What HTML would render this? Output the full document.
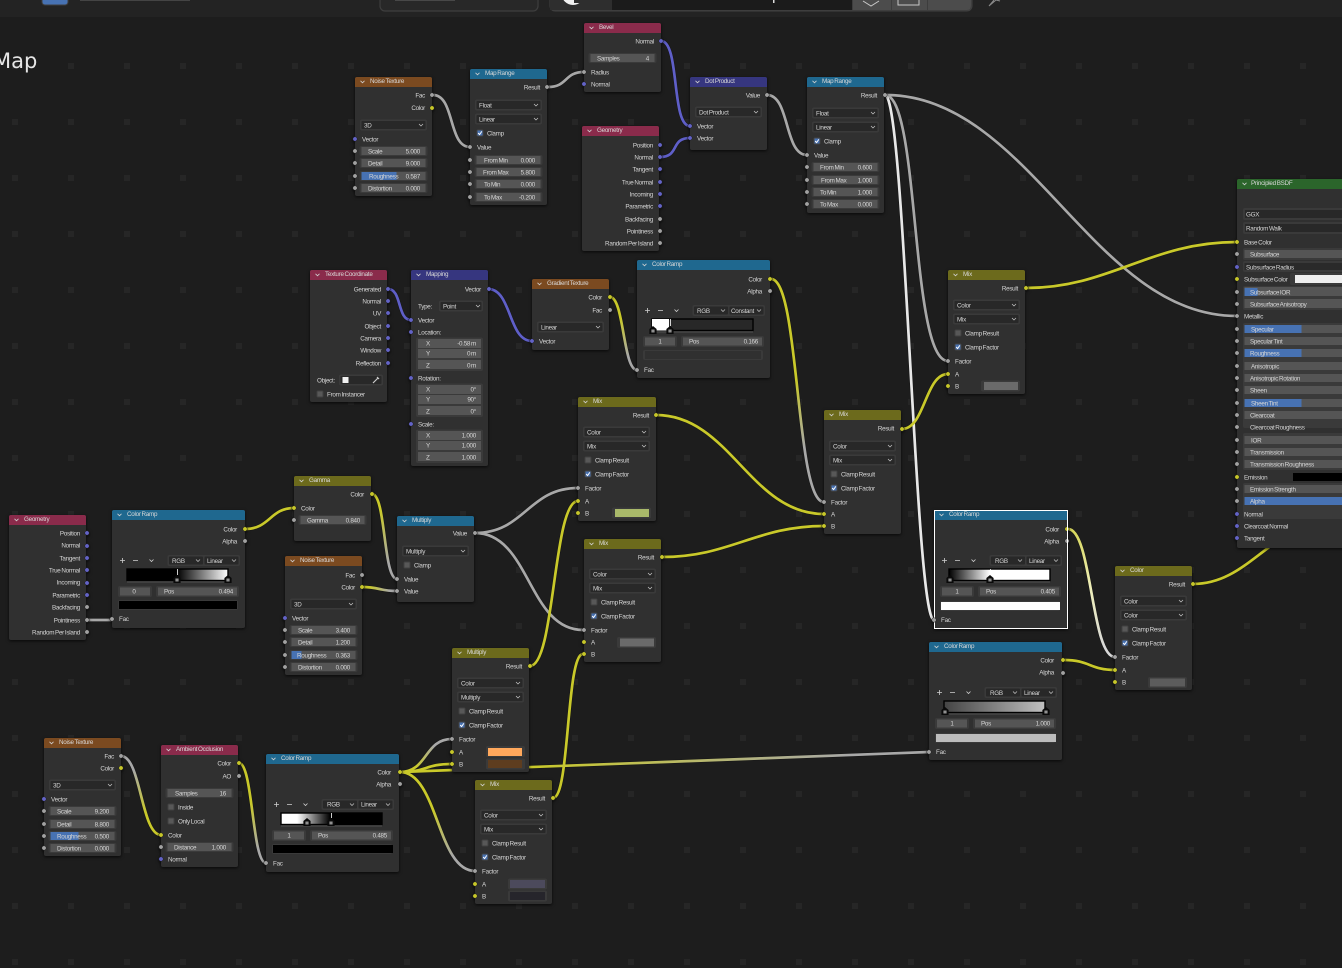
<!DOCTYPE html>
<html><head><meta charset="utf-8"><title>Node Editor Map</title>
<style>
html,body{margin:0;padding:0;background:#1d1d1d;width:1342px;height:968px;overflow:hidden}
svg{display:block;position:absolute;left:0;top:0;filter:blur(.3px)}
text{font-family:"Liberation Sans",sans-serif;font-size:6.3px;fill:#d6d6d6;letter-spacing:-.28px;word-spacing:-.6px}
.e{text-anchor:end}
.c{text-anchor:middle}
.h{fill:#d8d8d8}
.n{filter:drop-shadow(0 1px 1.5px rgba(0,0,0,.75))}
.w{fill:none;stroke-width:2.7;stroke-linecap:round}
.o{fill:none;stroke:#141414;stroke-width:3.8;stroke-linecap:round;opacity:.7}
.b{fill:#303030}
</style></head>
<body>
<svg width="1342" height="968" viewBox="0 0 1342 968" xmlns="http://www.w3.org/2000/svg">
<defs>
<pattern id="grid" patternUnits="userSpaceOnUse" x="12" y="7" width="56" height="56"><rect width="6" height="6" fill="#262626"/></pattern>
<linearGradient id="yg1" gradientUnits="userSpaceOnUse" x1="771" y1="279" x2="824" y2="502"><stop offset=".45" stop-color="#c9c92a"/><stop offset=".75" stop-color="#a8a8a8"/></linearGradient>
<linearGradient id="yg2" gradientUnits="userSpaceOnUse" x1="610" y1="297" x2="637" y2="370"><stop offset=".3" stop-color="#c9c92a"/><stop offset=".8" stop-color="#a8a8a8"/></linearGradient>
<linearGradient id="yg3" gradientUnits="userSpaceOnUse" x1="372" y1="494" x2="397" y2="579"><stop offset=".2" stop-color="#c9c92a"/><stop offset=".8" stop-color="#a8a8a8"/></linearGradient>
<linearGradient id="yg4" gradientUnits="userSpaceOnUse" x1="362" y1="587" x2="397" y2="591"><stop offset=".2" stop-color="#c9c92a"/><stop offset=".8" stop-color="#a8a8a8"/></linearGradient>
<linearGradient id="yg5" gradientUnits="userSpaceOnUse" x1="400" y1="772" x2="452" y2="739"><stop offset=".25" stop-color="#c9c92a"/><stop offset=".7" stop-color="#a8a8a8"/></linearGradient>
<linearGradient id="yg6" gradientUnits="userSpaceOnUse" x1="400" y1="772" x2="475" y2="871"><stop offset=".4" stop-color="#c9c92a"/><stop offset=".8" stop-color="#a8a8a8"/></linearGradient>
<linearGradient id="yg7" gradientUnits="userSpaceOnUse" x1="400" y1="772" x2="929" y2="752"><stop offset=".25" stop-color="#c9c92a"/><stop offset=".85" stop-color="#a8a8a8"/></linearGradient>
<linearGradient id="gy1" gradientUnits="userSpaceOnUse" x1="121" y1="756" x2="161" y2="835"><stop offset=".2" stop-color="#a8a8a8"/><stop offset=".7" stop-color="#c9c92a"/></linearGradient>
<linearGradient id="yg8" gradientUnits="userSpaceOnUse" x1="239" y1="763" x2="266" y2="863"><stop offset=".4" stop-color="#c9c92a"/><stop offset=".85" stop-color="#a8a8a8"/></linearGradient>
<linearGradient id="yw" gradientUnits="userSpaceOnUse" x1="1068" y1="529" x2="1115" y2="657"><stop offset=".05" stop-color="#d8d860"/><stop offset=".45" stop-color="#eeeeb8"/><stop offset=".9" stop-color="#d8d8d8"/></linearGradient>
<linearGradient id="r1"><stop offset=".494" stop-color="#000"/><stop offset="1" stop-color="#fff"/></linearGradient>
<linearGradient id="r2"><stop offset="0" stop-color="#000"/><stop offset=".405" stop-color="#fff"/></linearGradient>
<linearGradient id="r3"><stop offset="0" stop-color="#444"/><stop offset="1" stop-color="#c0c0c0"/></linearGradient>
<linearGradient id="r4"><stop offset=".16" stop-color="#fff"/><stop offset=".485" stop-color="#000"/></linearGradient>
<g id="F"><rect x="4.5" y="-5" width="68" height="10" rx="2" fill="#3a3a3a"/><rect x="6.5" y="-4" width="64" height="8" fill="#555"/></g>
<g id="D"><rect x="5" y="-5.5" width="67" height="11" rx="2" fill="#3a3a3a"/><rect x="6.5" y="-4" width="64" height="8" rx="1" fill="#282828"/><polyline points="64,-1 66,1 68,-1" fill="none" stroke="#c8c8c8" stroke-width=".7"/></g>
<g id="C"><rect x="6.5" y="-3.5" width="7" height="7" rx="1.5" fill="#444"/><rect x="7.5" y="-2.5" width="5" height="5" fill="#4772b3"/><polyline points="8.2,0 9.6,1.6 11.8,-1.6" fill="none" stroke="#fff" stroke-width="1"/></g>
<g id="U"><rect x="6.5" y="-3.5" width="7" height="7" rx="1.5" fill="#404040"/><rect x="7.5" y="-2.5" width="5" height="5" fill="#585858"/></g>
<circle id="sg" r="2.2" fill="#a1a1a1" stroke="#1a1a1a" stroke-width=".5"/>
<circle id="sy" r="2.2" fill="#c7c729" stroke="#1a1a1a" stroke-width=".5"/>
<circle id="sb" r="2.2" fill="#6363c7" stroke="#1a1a1a" stroke-width=".5"/>
<g id="H"><path d="M-3.6 8V3L0 0 3.600 3V8Z" fill="#0a0a0a"/><rect x="-1.6" y="3.5" width="3.2" height="3" fill="#909090"/></g>
<polyline id="v" points="5.5,3.8 7.5,5.8 9.5,3.8" fill="none" stroke="#d0d0d0" stroke-width=".8"/>
<g id="X"><rect x="6" y="-5" width="120" height="10" rx="2" fill="#3a3a3a"/></g>
<g id="RB"><rect width="133" height="118" rx="2" class="b"/>
<path d="M8 50.5h5M10.5 48v5M21 50.5h5" stroke="#cfcfcf" stroke-width=".8" fill="none"/><polyline points="37.5,49.5 39.5,51.5 41.5,49.5" fill="none" stroke="#cfcfcf" stroke-width=".8"/>
<rect x="55.5" y="45" width="72.5" height="11" rx="2" fill="#3a3a3a"/><rect x="57" y="46.5" width="34" height="8" rx="1" fill="#282828"/><rect x="92.5" y="46.5" width="34" height="8" rx="1" fill="#282828"/>
<polyline points="84,49.5 86,51.5 88,49.5" fill="none" stroke="#c8c8c8" stroke-width=".7"/><polyline points="120,49.5 122,51.5 124,49.5" fill="none" stroke="#c8c8c8" stroke-width=".7"/>
<rect x="6" y="76" width="34" height="11" rx="2" fill="#3a3a3a"/><rect x="8" y="77.5" width="30" height="8" fill="#555"/>
<rect x="44" y="76" width="83" height="11" rx="2" fill="#3a3a3a"/><rect x="46" y="77.5" width="79" height="8" fill="#555"/>
<rect x="15" y="71.5" width="101" height=".9" fill="#5a5a5a"/>
</g>
</defs>
<rect width="1342" height="968" fill="#1d1d1d"/>
<rect width="1342" height="968" fill="url(#grid)"/>

<!-- top bar -->
<rect width="1342" height="17" fill="#232323"/>
<rect x="42" y="-8" width="26" height="13" rx="3" fill="#4772b3" stroke="#3f3f3f"/>
<rect x="380" y="-10" width="158" height="21" rx="5" fill="#282828" stroke="#3e3e3e" stroke-width="1.2"/>
<rect x="550" y="-10" width="422" height="21" rx="5" fill="#3d3d3d" stroke="#404040" stroke-width="1"/>
<path d="M555 -10H612V10H550V-5Z" fill="#2e2e2e"/>
<rect x="612" y="-10" width="240" height="20" fill="#1b1b1b"/>
<rect x="853" y="-10" width="38" height="20" fill="#4c4c4c"/><rect x="892" y="-10" width="35" height="20" fill="#4c4c4c"/><path d="M928 -10H967Q971 -10 971 -5V5Q971 10 967 10H928Z" fill="#4c4c4c"/>
<polyline points="863,1 871,6 879,1" fill="none" stroke="#c8c8c8" stroke-width="1"/>
<path d="M898 -4V5H919V-4" fill="none" stroke="#c8c8c8" stroke-width="1"/>
<rect x="773" y="0" width="1.5" height="3" fill="#ddd"/>
<circle cx="573" cy="-6.500" r="11.5" fill="#f0f0f0"/><rect x="574" y="-10" width="14" height="13" fill="#2e2e2e"/>
<path d="M989 6L996 0M996 0L1000 1M989 6L994 0" fill="none" stroke="#8a8a8a" stroke-width="1"/>
<rect x="80" y="0" width="110" height="1" fill="#444"/><rect x="395" y="0" width="60" height="1" fill="#484848"/>
<text x="-7" y="68" style="font-size:21px;fill:#e6e6e6;letter-spacing:0;font-family:'DejaVu Sans',sans-serif">Map</text>

<!-- wires (shadows) -->
<g class="o">
<path d="M433 95C455 95 448 147 470 147"/><path d="M548 87C568 87 564 72 584 72"/><path d="M661 41C680 41 671 126 690 126"/><path d="M660 157C680 157 670 138 690 138"/>
<path d="M767 95C790 95 784 155 807 155"/><path d="M885 95C1030 95 1092 316 1237 316"/><path d="M885 95C920 95 910 361 948 361"/><path d="M885 95C905 95 915 620 934 620"/>
<path d="M388 289C402 289 397 320 411 320"/><path d="M488 289C512 289 508 341 532 341"/><path d="M610 297C624 297 623 370 637 370"/><path d="M771 279C800 279 795 502 824 502"/>
<path d="M1026 288C1110 288 1150 242 1237 242"/><path d="M902 429C925 429 925 374 948 374"/><path d="M656 415C730 415 750 514 824 514"/><path d="M662 557C730 557 756 526 824 526"/>
<path d="M1193 584C1225 584 1245 565 1268 548L1290 530"/><path d="M372 494C386 494 383 579 397 579"/><path d="M362 587C380 587 379 591 397 591"/><path d="M245 529C270 529 270 508 294 508"/>
<path d="M475 533C525 533 528 488 578 488"/><path d="M475 533C530 533 528 630 583 630"/><path d="M87 620H112"/><path d="M530 666C555 666 553 501 578 501"/><path d="M553 798C570 798 566 654 583 654"/>
<path d="M400 772C428 772 424 739 452 739"/><path d="M400 772C428 772 424 764 452 764"/><path d="M400 772C438 772 437 871 475 871"/><path d="M400 772C420 772 910 752 929 752"/>
<path d="M121 756C141 756 141 835 161 835"/><path d="M239 763C253 763 252 863 266 863"/><path d="M1068 529C1092 529 1091 657 1115 657"/><path d="M1064 660C1090 660 1090 670 1115 670"/>
</g>
<!-- wires -->
<g class="w">
<g stroke="#a8a8a8">
<path d="M433 95C455 95 448 147 470 147"/><path d="M548 87C568 87 564 72 584 72"/><path d="M767 95C790 95 784 155 807 155"/><path d="M885 95C1030 95 1092 316 1237 316"/><path d="M885 95C920 95 910 361 948 361"/>
<path d="M475 533C525 533 528 488 578 488"/><path d="M475 533C530 533 528 630 583 630"/><path d="M87 620H112"/>
</g>
<path d="M885 95C905 95 915 620 934 620" stroke="#e8e8e8"/>
<g stroke="#5f5fc8">
<path d="M661 41C680 41 671 126 690 126"/><path d="M660 157C680 157 670 138 690 138"/><path d="M388 289C402 289 397 320 411 320"/><path d="M488 289C512 289 508 341 532 341"/>
</g>
<g stroke="#c9c92a">
<path d="M1026 288C1110 288 1150 242 1237 242"/><path d="M902 429C925 429 925 374 948 374"/><path d="M656 415C730 415 750 514 824 514"/><path d="M662 557C730 557 756 526 824 526"/><path d="M1193 584C1225 584 1245 565 1268 548L1290 530"/><path d="M245 529C270 529 270 508 294 508"/><path d="M530 666C555 666 553 501 578 501"/><path d="M553 798C570 798 566 654 583 654"/><path d="M400 772C428 772 424 764 452 764"/><path d="M1064 660C1090 660 1090 670 1115 670"/>
</g>
<path d="M610 297C624 297 623 370 637 370" stroke="url(#yg2)"/>
<path d="M771 279C800 279 795 502 824 502" stroke="url(#yg1)"/>
<path d="M372 494C386 494 383 579 397 579" stroke="url(#yg3)"/>
<path d="M362 587C380 587 379 591 397 591" stroke="url(#yg4)"/>
<path d="M400 772C428 772 424 739 452 739" stroke="url(#yg5)"/>
<path d="M400 772C438 772 437 871 475 871" stroke="url(#yg6)"/>
<path d="M400 772C420 772 910 752 929 752" stroke="url(#yg7)"/>
<path d="M121 756C141 756 141 835 161 835" stroke="url(#gy1)"/>
<path d="M239 763C253 763 252 863 266 863" stroke="url(#yg8)"/>
<path d="M1068 529C1092 529 1091 657 1115 657" stroke="url(#yw)"/>
</g>

<!-- Noise Texture 1 -->
<g class="n" transform="translate(355,77)"><rect width="77" height="119" rx="2" class="b"/><path d="M0 10V2Q0 0 2 0H75Q77 0 77 2V10Z" fill="#7b4a20"/><use href="#v"/><text x="15" y="6.2" class="h">Noise Texture</text>
<text x="70" y="20.5" class="e">Fac</text><text x="70" y="33" class="e">Color</text><use href="#sg" x="77" y="18"/><use href="#sy" x="77" y="31"/>
<use href="#D" y="48"/><text x="9" y="50.5">3D</text><text x="7" y="64.5">Vector</text><use href="#sb" y="62"/>
<use href="#F" y="74"/><text x="13" y="76.5">Scale</text><text x="65" y="76.5" class="e">5.000</text><use href="#sg" y="74"/>
<use href="#F" y="86"/><text x="13" y="88.5">Detail</text><text x="65" y="88.5" class="e">9.000</text><use href="#sg" y="86"/>
<use href="#F" y="99"/><rect x="6.5" y="95" width="35" height="8" fill="#4772b3"/><text x="14" y="101.5">Roughness</text><text x="65" y="101.5" class="e">0.587</text><use href="#sg" y="99"/>
<use href="#F" y="111"/><text x="13" y="113.5">Distortion</text><text x="65" y="113.5" class="e">0.000</text><use href="#sg" y="111"/></g>

<!-- MapRange 1 -->
<g class="n" transform="translate(470,69)"><rect width="77" height="136" rx="2" class="b"/><path d="M0 10V2Q0 0 2 0H75Q77 0 77 2V10Z" fill="#1f688f"/><use href="#v"/><text x="15" y="6.2" class="h">Map Range</text>
<text x="70" y="20.5" class="e">Result</text><use href="#sg" x="77" y="18"/>
<use href="#D" y="36"/><text x="9" y="38.5">Float</text><use href="#D" y="50"/><text x="9" y="52.5">Linear</text>
<use href="#C" y="64"/><text x="17" y="66.5">Clamp</text><text x="7" y="80.5">Value</text><use href="#sg" y="78"/>
<use href="#F" y="91"/><text x="14" y="93.5">From Min</text><text x="65" y="93.5" class="e">0.000</text><use href="#sg" y="91"/>
<use href="#F" y="103"/><text x="13" y="105.5">From Max</text><text x="65" y="105.5" class="e">5.800</text><use href="#sg" y="103"/>
<use href="#F" y="115"/><text x="14" y="117.5">To Min</text><text x="65" y="117.5" class="e">0.000</text><use href="#sg" y="115"/>
<use href="#F" y="128"/><text x="14" y="130.5">To Max</text><text x="65" y="130.5" class="e">-0.200</text><use href="#sg" y="128"/></g>

<!-- Bevel -->
<g class="n" transform="translate(584,23)"><rect width="77" height="69" rx="2" class="b"/><path d="M0 10V2Q0 0 2 0H75Q77 0 77 2V10Z" fill="#8a2b4b"/><use href="#v"/><text x="15" y="6.2" class="h">Bevel</text>
<text x="70" y="20.5" class="e">Normal</text><use href="#sb" x="77" y="18"/>
<use href="#F" y="35"/><text x="13" y="37.5">Samples</text><text x="65" y="37.5" class="e">4</text>
<text x="7" y="51.5">Radius</text><use href="#sg" y="49"/><text x="7" y="63.5">Normal</text><use href="#sb" y="61"/></g>

<!-- Geometry 1 -->
<g class="n" transform="translate(582,126)"><rect width="77" height="125" rx="2" class="b"/><path d="M0 10V2Q0 0 2 0H75Q77 0 77 2V10Z" fill="#8a2b4b"/><use href="#v"/><text x="15" y="6.2" class="h">Geometry</text>
<text x="71" y="21.5" class="e">Position</text><use href="#sb" x="78" y="19"/><text x="71" y="33.5" class="e">Normal</text><use href="#sb" x="78" y="31"/><text x="71" y="45.5" class="e">Tangent</text><use href="#sb" x="78" y="43"/><text x="71" y="58.5" class="e">True Normal</text><use href="#sb" x="78" y="56"/><text x="71" y="70.5" class="e">Incoming</text><use href="#sb" x="78" y="68"/><text x="71" y="82.5" class="e">Parametric</text><use href="#sb" x="78" y="80"/><text x="71" y="95.5" class="e">Backfacing</text><use href="#sg" x="78" y="93"/><text x="71" y="107.5" class="e">Pointiness</text><use href="#sg" x="78" y="105"/><text x="71" y="119.5" class="e">Random Per Island</text><use href="#sg" x="78" y="117"/></g>

<!-- Dot Product -->
<g class="n" transform="translate(690,77)"><rect width="77" height="73" rx="2" class="b"/><path d="M0 10V2Q0 0 2 0H75Q77 0 77 2V10Z" fill="#36367f"/><use href="#v"/><text x="15" y="6.2" class="h">Dot Product</text>
<text x="70" y="20.5" class="e">Value</text><use href="#sg" x="77" y="18"/><use href="#D" y="35"/><text x="9" y="37.5">Dot Product</text>
<text x="7" y="51.5">Vector</text><use href="#sb" y="49"/><text x="7" y="63.5">Vector</text><use href="#sb" y="61"/></g>

<!-- MapRange 2 -->
<g class="n" transform="translate(807,77)"><rect width="77" height="136" rx="2" class="b"/><path d="M0 10V2Q0 0 2 0H75Q77 0 77 2V10Z" fill="#1f688f"/><use href="#v"/><text x="15" y="6.2" class="h">Map Range</text>
<text x="70" y="20.5" class="e">Result</text><use href="#sg" x="78" y="18"/>
<use href="#D" y="36"/><text x="9" y="38.5">Float</text><use href="#D" y="50"/><text x="9" y="52.5">Linear</text>
<use href="#C" y="64"/><text x="17" y="66.5">Clamp</text><text x="7" y="80.5">Value</text><use href="#sg" y="78"/>
<use href="#F" y="90"/><text x="13" y="92.5">From Min</text><text x="65" y="92.5" class="e">0.600</text><use href="#sg" y="90"/>
<use href="#F" y="103"/><text x="14" y="105.5">From Max</text><text x="65" y="105.5" class="e">1.000</text><use href="#sg" y="103"/>
<use href="#F" y="115"/><text x="13" y="117.5">To Min</text><text x="65" y="117.5" class="e">1.000</text><use href="#sg" y="115"/>
<use href="#F" y="127"/><text x="13" y="129.5">To Max</text><text x="65" y="129.5" class="e">0.000</text><use href="#sg" y="127"/></g>

<!-- Texture Coordinate -->
<g class="n" transform="translate(310,270)"><rect width="77" height="132" rx="2" class="b"/><path d="M0 10V2Q0 0 2 0H75Q77 0 77 2V10Z" fill="#8a2b4b"/><use href="#v"/><text x="15" y="6.2" class="h">Texture Coordinate</text>
<text x="71" y="21.5" class="e">Generated</text><use href="#sb" x="78" y="19"/><text x="71" y="33.5" class="e">Normal</text><use href="#sb" x="78" y="31"/><text x="71" y="45.5" class="e">UV</text><use href="#sb" x="78" y="43"/><text x="71" y="58.5" class="e">Object</text><use href="#sb" x="78" y="56"/><text x="71" y="70.5" class="e">Camera</text><use href="#sb" x="78" y="68"/><text x="71" y="82.5" class="e">Window</text><use href="#sb" x="78" y="80"/><text x="71" y="95.5" class="e">Reflection</text><use href="#sb" x="78" y="93"/>
<text x="7" y="112.5">Object:</text><rect x="29" y="104.5" width="44" height="11" rx="2" fill="#3a3a3a"/><rect x="30.5" y="106" width="41" height="8" rx="1" fill="#282828"/><rect x="32.5" y="107" width="6" height="6" fill="#f0f0f0"/><path d="M63 113l5-5m-1-1l2 2" stroke="#ccc" stroke-width="1.2" fill="none"/>
<use href="#U" y="124"/><text x="17" y="126.5">From Instancer</text></g>

<!-- Mapping -->
<g class="n" transform="translate(411,270)"><rect width="77" height="196" rx="2" class="b"/><path d="M0 10V2Q0 0 2 0H75Q77 0 77 2V10Z" fill="#36367f"/><use href="#v"/><text x="15" y="6.2" class="h">Mapping</text>
<text x="70" y="21.5" class="e">Vector</text><use href="#sb" x="78" y="19"/>
<text x="7" y="38.5">Type:</text><rect x="28" y="30.5" width="44" height="11" rx="2" fill="#3a3a3a"/><rect x="29.5" y="32" width="41" height="8" rx="1" fill="#282828"/><polyline points="65,35 67,37 69,35" fill="none" stroke="#c8c8c8" stroke-width=".7"/><text x="32" y="38.5">Point</text>
<text x="7" y="52.5">Vector</text><use href="#sb" y="50"/><text x="7" y="64.5">Location:</text><use href="#sb" y="62"/>
<rect x="5" y="67.5" width="67" height="33.500" rx="2" fill="#3a3a3a"/><rect x="7" y="69" width="63" height="9" fill="#555"/><rect x="7" y="79" width="63" height="9" fill="#555"/><rect x="7" y="90" width="63" height="9" fill="#555"/>
<text x="15" y="75.500">X</text><text x="65" y="75.500" class="e">-0.58 m</text><text x="15" y="85.500">Y</text><text x="65" y="85.500" class="e">0 m</text><text x="15" y="97.500">Z</text><text x="65" y="97.500" class="e">0 m</text>
<text x="7" y="110.5">Rotation:</text><use href="#sb" y="108"/>
<rect x="5" y="113.5" width="67" height="33.500" rx="2" fill="#3a3a3a"/><rect x="7" y="115" width="63" height="9" fill="#555"/><rect x="7" y="125" width="63" height="9" fill="#555"/><rect x="7" y="136" width="63" height="9" fill="#555"/>
<text x="15" y="121.5">X</text><text x="65" y="121.5" class="e">0°</text><text x="15" y="131.5">Y</text><text x="65" y="131.5" class="e">90°</text><text x="15" y="143.500">Z</text><text x="65" y="143.500" class="e">0°</text>
<text x="7" y="156.5">Scale:</text><use href="#sb" y="154"/>
<rect x="5" y="159.5" width="67" height="33.500" rx="2" fill="#3a3a3a"/><rect x="7" y="161" width="63" height="9" fill="#555"/><rect x="7" y="171" width="63" height="9" fill="#555"/><rect x="7" y="182" width="63" height="9" fill="#555"/>
<text x="15" y="167.5">X</text><text x="65" y="167.5" class="e">1.000</text><text x="15" y="177.5">Y</text><text x="65" y="177.5" class="e">1.000</text><text x="15" y="189.5">Z</text><text x="65" y="189.5" class="e">1.000</text></g>

<!-- Gradient Texture -->
<g class="n" transform="translate(532,279)"><rect width="77" height="71" rx="2" class="b"/><path d="M0 10V2Q0 0 2 0H75Q77 0 77 2V10Z" fill="#7b4a20"/><use href="#v"/><text x="15" y="6.2" class="h">Gradient Texture</text>
<text x="70" y="20.5" class="e">Color</text><use href="#sy" x="78" y="18"/><text x="70" y="33.5" class="e">Fac</text><use href="#sg" x="78" y="31"/>
<use href="#D" y="48"/><text x="9" y="50.5">Linear</text><text x="7" y="64.5">Vector</text><use href="#sb" y="62"/></g>

<!-- Color Ramp top -->
<g class="n" transform="translate(637,260)"><use href="#RB"/><path d="M0 10V2Q0 0 2 0H131Q133 0 133 2V10Z" fill="#1f688f"/><use href="#v"/><text x="15" y="6.2" class="h">Color Ramp</text>
<text x="125" y="21.5" class="e">Color</text><use href="#sy" x="133" y="19"/><text x="125" y="33.5" class="e">Alpha</text><use href="#sg" x="133" y="31"/>
<text x="60" y="53">RGB</text><text x="94" y="53">Constant</text>
<rect x="15" y="59" width="101" height="11.500" fill="#282828" stroke="#000" stroke-width="1.400"/><rect x="15" y="59" width="17" height="11.500" fill="#fff"/><rect x="33" y="59" width=".8" height="7" fill="#fff"/><use href="#H" x="16" y="66"/><use href="#H" x="33" y="66"/>
<text x="23" y="83.500" class="c">1</text><text x="52" y="83.500">Pos</text><text x="121" y="83.500" class="e">0.166</text>
<use href="#X" y="95"/><rect x="8" y="91" width="116" height="8" fill="#303030"/><text x="7" y="112">Fac</text><use href="#sg" y="110"/></g>

<!-- Mix A right top -->
<g class="n" transform="translate(948,270)"><rect width="77" height="124" rx="2" class="b"/><path d="M0 10V2Q0 0 2 0H75Q77 0 77 2V10Z" fill="#6c6a1c"/><use href="#v"/><text x="15" y="6.2" class="h">Mix</text>
<text x="70" y="20.5" class="e">Result</text><use href="#sy" x="78" y="18"/><use href="#D" y="35"/><text x="9" y="37.5">Color</text><use href="#D" y="49"/><text x="9" y="51.5">Mix</text>
<use href="#U" y="63"/><text x="17" y="65.5">Clamp Result</text><use href="#C" y="77"/><text x="17" y="79.5">Clamp Factor</text>
<text x="7" y="93.5">Factor</text><use href="#sg" y="91"/><text x="7" y="106.5">A</text><use href="#sy" y="104"/><text x="7" y="118.5">B</text><use href="#sy" y="116"/><rect x="33" y="110.5" width="39" height="11" rx="2" fill="#3a3a3a"/><rect x="36" y="112" width="34" height="8" fill="#6a6a6a"/></g>

<!-- Mix center-1 -->
<g class="n" transform="translate(578,397)"><rect width="78" height="124" rx="2" class="b"/><path d="M0 10V2Q0 0 2 0H76Q78 0 78 2V10Z" fill="#6c6a1c"/><use href="#v"/><text x="15" y="6.2" class="h">Mix</text>
<text x="71" y="20.5" class="e">Result</text><use href="#sy" x="78" y="18"/><use href="#D" y="35"/><text x="9" y="37.5">Color</text><use href="#D" y="49"/><text x="9" y="51.5">Mix</text>
<use href="#U" y="63"/><text x="17" y="65.5">Clamp Result</text><use href="#C" y="77"/><text x="17" y="79.5">Clamp Factor</text>
<text x="7" y="93.5">Factor</text><use href="#sg" y="91"/><text x="7" y="106.5">A</text><use href="#sy" y="104"/><text x="7" y="118.5">B</text><use href="#sy" y="116"/><rect x="34" y="110.5" width="39" height="11" rx="2" fill="#3a3a3a"/><rect x="37" y="112" width="34" height="8" fill="#a9b96a"/></g>

<!-- Mix right-center -->
<g class="n" transform="translate(824,410)"><rect width="77" height="124" rx="2" class="b"/><path d="M0 10V2Q0 0 2 0H75Q77 0 77 2V10Z" fill="#6c6a1c"/><use href="#v"/><text x="15" y="6.2" class="h">Mix</text>
<text x="70" y="20.5" class="e">Result</text><use href="#sy" x="78" y="19"/><use href="#D" y="36"/><text x="9" y="38.5">Color</text><use href="#D" y="50"/><text x="9" y="52.5">Mix</text>
<use href="#U" y="64"/><text x="17" y="66.5">Clamp Result</text><use href="#C" y="78"/><text x="17" y="80.5">Clamp Factor</text>
<text x="7" y="94.500">Factor</text><use href="#sg" y="92"/><text x="7" y="106.5">A</text><use href="#sy" y="104"/><text x="7" y="118.5">B</text><use href="#sy" y="116"/></g>

<!-- Mix center-2 -->
<g class="n" transform="translate(584,539)"><rect width="77" height="123" rx="2" class="b"/><path d="M0 10V2Q0 0 2 0H75Q77 0 77 2V10Z" fill="#6c6a1c"/><use href="#v"/><text x="15" y="6.2" class="h">Mix</text>
<text x="70" y="20.5" class="e">Result</text><use href="#sy" x="78" y="18"/><use href="#D" y="35"/><text x="9" y="37.5">Color</text><use href="#D" y="49"/><text x="9" y="51.5">Mix</text>
<use href="#U" y="63"/><text x="17" y="65.5">Clamp Result</text><use href="#C" y="77"/><text x="17" y="79.5">Clamp Factor</text>
<text x="7" y="93.5">Factor</text><use href="#sg" y="91"/><text x="7" y="105.5">A</text><use href="#sy" y="103"/><text x="7" y="117.5">B</text><use href="#sy" y="115"/><rect x="33" y="98" width="39" height="11" rx="2" fill="#3a3a3a"/><rect x="36" y="99.500" width="34" height="8" fill="#6a6a6a"/></g>

<!-- Gamma -->
<g class="n" transform="translate(294,476)"><rect width="77" height="65" rx="2" class="b"/><path d="M0 10V2Q0 0 2 0H75Q77 0 77 2V10Z" fill="#6c6a1c"/><use href="#v"/><text x="15" y="6.2" class="h">Gamma</text>
<text x="70" y="20.5" class="e">Color</text><use href="#sy" x="78" y="18"/><text x="7" y="34.5">Color</text><use href="#sy" y="32"/>
<use href="#F" y="44"/><text x="13" y="46.5">Gamma</text><text x="66" y="46.5" class="e">0.840</text><use href="#sg" y="44"/></g>

<!-- Multiply math -->
<g class="n" transform="translate(397,516)"><rect width="77" height="86" rx="2" class="b"/><path d="M0 10V2Q0 0 2 0H75Q77 0 77 2V10Z" fill="#1f688f"/><use href="#v"/><text x="15" y="6.2" class="h">Multiply</text>
<text x="70" y="19.5" class="e">Value</text><use href="#sg" x="78" y="17"/><use href="#D" y="35"/><text x="9" y="37.5">Multiply</text>
<use href="#U" y="49"/><text x="17" y="51.5">Clamp</text><text x="7" y="65.5">Value</text><use href="#sg" y="63"/><text x="7" y="77.5">Value</text><use href="#sg" y="75"/></g>

<!-- Noise 2 -->
<g class="n" transform="translate(285,556)"><rect width="77" height="119" rx="2" class="b"/><path d="M0 10V2Q0 0 2 0H75Q77 0 77 2V10Z" fill="#7b4a20"/><use href="#v"/><text x="15" y="6.2" class="h">Noise Texture</text>
<text x="70" y="21.500" class="e">Fac</text><text x="70" y="33.500" class="e">Color</text><use href="#sg" x="77" y="19"/><use href="#sy" x="77" y="31"/>
<use href="#D" y="48"/><text x="9" y="50.5">3D</text><text x="7" y="64.5">Vector</text><use href="#sb" y="62"/>
<use href="#F" y="74"/><text x="13" y="76.5">Scale</text><text x="65" y="76.5" class="e">3.400</text><use href="#sg" y="74"/>
<use href="#F" y="86"/><text x="13" y="88.5">Detail</text><text x="65" y="88.5" class="e">1.200</text><use href="#sg" y="86"/>
<use href="#F" y="99"/><rect x="6.5" y="95" width="10" height="8" fill="#4772b3"/><text x="12" y="101.5">Roughness</text><text x="65" y="101.5" class="e">0.363</text><use href="#sg" y="99"/>
<use href="#F" y="111"/><text x="13" y="113.5">Distortion</text><text x="65" y="113.5" class="e">0.000</text><use href="#sg" y="111"/></g>

<!-- Geometry 2 -->
<g class="n" transform="translate(9,515)"><rect width="77" height="125" rx="2" class="b"/><path d="M0 10V2Q0 0 2 0H75Q77 0 77 2V10Z" fill="#8a2b4b"/><use href="#v"/><text x="15" y="6.2" class="h">Geometry</text>
<text x="71" y="20.5" class="e">Position</text><use href="#sb" x="78" y="18"/><text x="71" y="32.5" class="e">Normal</text><use href="#sb" x="78" y="31"/><text x="71" y="45.5" class="e">Tangent</text><use href="#sb" x="78" y="43"/><text x="71" y="57.5" class="e">True Normal</text><use href="#sb" x="78" y="55"/><text x="71" y="69.5" class="e">Incoming</text><use href="#sb" x="78" y="68"/><text x="71" y="82.5" class="e">Parametric</text><use href="#sb" x="78" y="80"/><text x="71" y="94.5" class="e">Backfacing</text><use href="#sg" x="78" y="92"/><text x="71" y="107.5" class="e">Pointiness</text><use href="#sg" x="78" y="105"/><text x="71" y="119.5" class="e">Random Per Island</text><use href="#sg" x="78" y="117"/></g>

<!-- Color Ramp left -->
<g class="n" transform="translate(112,510)"><use href="#RB"/><path d="M0 10V2Q0 0 2 0H131Q133 0 133 2V10Z" fill="#1f688f"/><use href="#v"/><text x="15" y="6.2" class="h">Color Ramp</text>
<text x="125" y="21.5" class="e">Color</text><use href="#sy" x="133" y="19"/><text x="125" y="33.5" class="e">Alpha</text><use href="#sg" x="133" y="31"/>
<text x="60" y="53">RGB</text><text x="95" y="53">Linear</text>
<rect x="15" y="59" width="101" height="11.500" fill="url(#r1)" stroke="#000" stroke-width="1.400"/><rect x="65" y="59" width=".8" height="6" fill="#fff"/><use href="#H" x="65" y="65"/><use href="#H" x="116" y="65"/>
<text x="22" y="83.500" class="c">0</text><text x="52" y="83.500">Pos</text><text x="121" y="83.500" class="e">0.494</text>
<use href="#X" y="95"/><rect x="7" y="91" width="118" height="8" fill="#000"/><text x="7" y="111">Fac</text><use href="#sg" y="109"/></g>

<!-- Selected Color Ramp -->
<g class="n" transform="translate(934,510)"><use href="#RB"/><path d="M0 10V2Q0 0 2 0H131Q133 0 133 2V10Z" fill="#1f688f"/><use href="#v"/><text x="15" y="6.2" class="h">Color Ramp</text>
<text x="125" y="21.5" class="e">Color</text><use href="#sy" x="133" y="19"/><text x="125" y="33.5" class="e">Alpha</text><use href="#sg" x="133" y="31"/>
<text x="61" y="53">RGB</text><text x="95" y="53">Linear</text>
<rect x="15" y="59" width="101" height="11.500" fill="url(#r2)" stroke="#000" stroke-width="1.400"/><rect x="56" y="59" width=".8" height="6" fill="#fff"/><use href="#H" x="16" y="65"/><use href="#H" x="56" y="65"/>
<text x="23" y="83.500" class="c">1</text><text x="52" y="83.500">Pos</text><text x="121" y="83.500" class="e">0.405</text>
<use href="#X" y="96"/><rect x="7" y="92" width="119" height="8" fill="#fff"/><text x="7" y="112">Fac</text>
<rect x=".5" y=".5" width="133" height="118" fill="none" stroke="#fff" stroke-width="1"/><use href="#sg" y="110"/></g>

<!-- Color Ramp bottom right -->
<g class="n" transform="translate(929,642)"><use href="#RB"/><path d="M0 10V2Q0 0 2 0H131Q133 0 133 2V10Z" fill="#1f688f"/><use href="#v"/><text x="15" y="6.2" class="h">Color Ramp</text>
<text x="125" y="20.5" class="e">Color</text><use href="#sy" x="134" y="18"/><text x="125" y="32.5" class="e">Alpha</text><use href="#sg" x="134" y="31"/>
<text x="61" y="53">RGB</text><text x="95" y="53">Linear</text>
<rect x="15" y="59" width="101" height="11.500" fill="url(#r3)" stroke="#000" stroke-width="1.400"/><use href="#H" x="16" y="65"/><use href="#H" x="117" y="65"/>
<text x="23" y="83.500" class="c">1</text><text x="52" y="83.500">Pos</text><text x="121" y="83.500" class="e">1.000</text>
<use href="#X" y="96"/><rect x="7" y="92" width="120" height="8" fill="#bdbdbd"/><text x="7" y="112">Fac</text><use href="#sg" y="110"/></g>

<!-- Color mix right -->
<g class="n" transform="translate(1115,566)"><rect width="77" height="124" rx="2" class="b"/><path d="M0 10V2Q0 0 2 0H75Q77 0 77 2V10Z" fill="#6c6a1c"/><use href="#v"/><text x="15" y="6.2" class="h">Color</text>
<text x="70" y="20.5" class="e">Result</text><use href="#sy" x="78" y="18"/><use href="#D" y="35"/><text x="9" y="37.5">Color</text><use href="#D" y="49"/><text x="9" y="51.5">Color</text>
<use href="#U" y="63"/><text x="17" y="65.5">Clamp Result</text><use href="#C" y="77"/><text x="17" y="79.5">Clamp Factor</text>
<text x="7" y="93.5">Factor</text><use href="#sg" y="91"/><text x="7" y="106.5">A</text><use href="#sy" y="104"/><text x="7" y="118.5">B</text><use href="#sy" y="116"/><rect x="33" y="111" width="39" height="11" rx="2" fill="#3a3a3a"/><rect x="35" y="112.500" width="35" height="8" fill="#5c5c5c"/></g>

<!-- Multiply mix -->
<g class="n" transform="translate(452,648)"><rect width="77" height="124" rx="2" class="b"/><path d="M0 10V2Q0 0 2 0H75Q77 0 77 2V10Z" fill="#6c6a1c"/><use href="#v"/><text x="15" y="6.2" class="h">Multiply</text>
<text x="70" y="20.5" class="e">Result</text><use href="#sy" x="78" y="18"/><use href="#D" y="35"/><text x="9" y="37.5">Color</text><use href="#D" y="49"/><text x="9" y="51.5">Multiply</text>
<use href="#U" y="63"/><text x="17" y="65.5">Clamp Result</text><use href="#C" y="77"/><text x="17" y="79.5">Clamp Factor</text>
<text x="7" y="93.5">Factor</text><use href="#sg" y="91"/><text x="7" y="106.5">A</text><use href="#sy" y="104"/><text x="7" y="118.5">B</text><use href="#sy" y="116"/>
<rect x="34" y="98" width="39" height="11" rx="2" fill="#3a3a3a"/><rect x="36" y="100" width="34" height="8" fill="#ffa85c"/><rect x="34" y="110.500" width="39" height="11" rx="2" fill="#3a3a3a"/><rect x="36" y="112" width="34" height="8" fill="#5e3d1f"/></g>

<!-- Mix bottom -->
<g class="n" transform="translate(475,780)"><rect width="77" height="124" rx="2" class="b"/><path d="M0 10V2Q0 0 2 0H75Q77 0 77 2V10Z" fill="#6c6a1c"/><use href="#v"/><text x="15" y="6.2" class="h">Mix</text>
<text x="70" y="20.5" class="e">Result</text><use href="#sy" x="78" y="18"/><use href="#D" y="35"/><text x="9" y="37.5">Color</text><use href="#D" y="49"/><text x="9" y="51.5">Mix</text>
<use href="#U" y="63"/><text x="17" y="65.5">Clamp Result</text><use href="#C" y="77"/><text x="17" y="79.5">Clamp Factor</text>
<text x="7" y="93.5">Factor</text><use href="#sg" y="91"/><text x="7" y="106.5">A</text><use href="#sy" y="104"/><text x="7" y="118.5">B</text><use href="#sy" y="116"/>
<rect x="33" y="98.500" width="39" height="11" rx="2" fill="#3a3a3a"/><rect x="35" y="100" width="35" height="8" fill="#4c4a5c"/><rect x="33" y="110.500" width="39" height="11" rx="2" fill="#3a3a3a"/><rect x="35" y="112" width="35" height="8" fill="#26252b"/></g>

<!-- Noise 3 -->
<g class="n" transform="translate(44,738)"><rect width="77" height="118" rx="2" class="b"/><path d="M0 10V2Q0 0 2 0H75Q77 0 77 2V10Z" fill="#7b4a20"/><use href="#v"/><text x="15" y="6.2" class="h">Noise Texture</text>
<text x="70" y="20.5" class="e">Fac</text><text x="70" y="32.5" class="e">Color</text><use href="#sg" x="77" y="18"/><use href="#sy" x="77" y="30"/>
<use href="#D" y="47"/><text x="9" y="49.5">3D</text><text x="7" y="63.5">Vector</text><use href="#sb" y="61"/>
<use href="#F" y="73"/><text x="13" y="75.5">Scale</text><text x="65" y="75.5" class="e">9.200</text><use href="#sg" y="73"/>
<use href="#F" y="86"/><text x="13" y="88.5">Detail</text><text x="65" y="88.5" class="e">8.800</text><use href="#sg" y="86"/>
<use href="#F" y="98"/><rect x="6.5" y="94" width="28" height="8" fill="#4772b3"/><text x="13" y="100.5">Roughness</text><text x="65" y="100.5" class="e">0.500</text><use href="#sg" y="98"/>
<use href="#F" y="110"/><text x="13" y="112.5">Distortion</text><text x="65" y="112.5" class="e">0.000</text><use href="#sg" y="110"/></g>

<!-- Ambient Occlusion -->
<g class="n" transform="translate(161,745)"><rect width="77" height="122" rx="2" class="b"/><path d="M0 10V2Q0 0 2 0H75Q77 0 77 2V10Z" fill="#8a2b4b"/><use href="#v"/><text x="15" y="6.2" class="h">Ambient Occlusion</text>
<text x="70" y="20.5" class="e">Color</text><use href="#sy" x="78" y="18"/><text x="70" y="33.500" class="e">AO</text><use href="#sg" x="78" y="31"/>
<use href="#F" y="48"/><text x="14" y="50.5">Samples</text><text x="65" y="50.5" class="e">16</text>
<use href="#U" y="62"/><text x="17" y="64.5">Inside</text><use href="#U" y="76"/><text x="17" y="78.5">Only Local</text>
<text x="7" y="92.5">Color</text><use href="#sy" y="90"/><use href="#F" y="102"/><text x="13" y="104.5">Distance</text><text x="65" y="104.5" class="e">1.000</text><use href="#sg" y="102"/>
<text x="7" y="116.5">Normal</text><use href="#sb" y="114"/></g>

<!-- Color Ramp bottom -->
<g class="n" transform="translate(266,754)"><use href="#RB"/><path d="M0 10V2Q0 0 2 0H131Q133 0 133 2V10Z" fill="#1f688f"/><use href="#v"/><text x="15" y="6.2" class="h">Color Ramp</text>
<text x="125" y="20.5" class="e">Color</text><use href="#sy" x="134" y="18"/><text x="125" y="32.5" class="e">Alpha</text><use href="#sg" x="134" y="30"/>
<text x="61" y="52.500">RGB</text><text x="95" y="52.500">Linear</text>
<rect x="15" y="59" width="101" height="11.500" fill="url(#r4)" stroke="#000" stroke-width="1.400"/><rect x="65" y="59" width=".8" height="5" fill="#fff"/><use href="#H" x="41" y="64"/><use href="#H" x="65" y="64"/>
<text x="23" y="83.500" class="c">1</text><text x="52" y="83.500">Pos</text><text x="121" y="83.500" class="e">0.485</text>
<use href="#X" y="95"/><rect x="7" y="91" width="120" height="8" fill="#000"/><text x="7" y="111.500">Fac</text><use href="#sg" y="109"/></g>

<!-- Principled BSDF -->
<g class="n" transform="translate(1237,179)"><rect width="140" height="369" rx="2" class="b"/><path d="M0 10V2Q0 0 2 0H140V10Z" fill="#2b652b"/><use href="#v"/><text x="14" y="6.2" class="h">Principled BSDF</text>
<g fill="#3a3a3a"><rect x="6" y="29" width="134" height="12" rx="2"/><rect x="6" y="43" width="134" height="12" rx="2"/></g><rect x="8" y="31" width="132" height="8" fill="#282828"/><rect x="8" y="45" width="132" height="8" fill="#282828"/><text x="9" y="37.500">GGX</text><text x="9" y="51.500">Random Walk</text>
<text x="7" y="65.500">Base Color</text><use href="#sy" y="63"/>
<g fill="#3a3a3a"><rect x="6" y="69" width="134" height="12" rx="2"/><rect x="6" y="82" width="134" height="11" rx="2"/><rect x="53" y="94" width="87" height="12" rx="2"/><rect x="6" y="107" width="134" height="24" rx="2"/><rect x="6" y="144" width="134" height="105" rx="2"/><rect x="6" y="254" width="134" height="37" rx="2"/><rect x="6" y="304" width="134" height="36" rx="2"/></g>
<g fill="#555"><rect x="7.500" y="71" width="133" height="8"/><rect x="7.500" y="108" width="133" height="9"/><rect x="7.500" y="120" width="133" height="9"/><rect x="7.500" y="146" width="133" height="8"/><rect x="7.500" y="158" width="133" height="8"/><rect x="7.500" y="170" width="133" height="8"/><rect x="7.500" y="183" width="133" height="8"/><rect x="7.500" y="195" width="133" height="8"/><rect x="7.500" y="207" width="133" height="8"/><rect x="7.500" y="220" width="133" height="8"/><rect x="7.500" y="232" width="133" height="8"/><rect x="7.500" y="257" width="133" height="8"/><rect x="7.500" y="269" width="133" height="8"/><rect x="7.500" y="281" width="133" height="8"/><rect x="7.500" y="306" width="133" height="8"/><rect x="7.500" y="318" width="133" height="8"/></g>
<rect x="7.500" y="84" width="133" height="7" fill="#2a2a2a"/><rect x="58" y="96" width="80" height="8" fill="#eee"/>
<g fill="#4772b3"><rect x="7.500" y="109" width="13" height="8"/><rect x="7.500" y="146" width="57" height="8"/><rect x="7.500" y="170" width="57" height="8"/><rect x="7.500" y="220" width="57" height="8"/><rect x="7.500" y="318" width="133" height="8"/></g>
<rect x="56" y="294" width="84" height="8" fill="#000"/>
<text x="13" y="77.500">Subsurface</text><use href="#sg" y="75"/><text x="9" y="90.500">Subsurface Radius</text><use href="#sb" y="88"/><text x="7" y="102.500">Subsurface Color</text><use href="#sy" y="100"/><text x="13" y="115.500">Subsurface IOR</text><use href="#sg" y="113"/><text x="13" y="127.500">Subsurface Anisotropy</text><use href="#sg" y="125"/><text x="7" y="139.500">Metallic</text><use href="#sg" y="137"/>
<text x="14" y="152.500">Specular</text><use href="#sg" y="150"/><text x="13" y="164.500">Specular Tint</text><use href="#sg" y="162"/><text x="13" y="176.500">Roughness</text><use href="#sg" y="174"/><text x="14" y="189.500">Anisotropic</text><use href="#sg" y="187"/><text x="13" y="201.500">Anisotropic Rotation</text><use href="#sg" y="199"/><text x="13" y="213.500">Sheen</text><use href="#sg" y="211"/><text x="14" y="226.500">Sheen Tint</text><use href="#sg" y="224"/><text x="13" y="238.500">Clearcoat</text><use href="#sg" y="236"/><text x="13" y="250.500">Clearcoat Roughness</text><use href="#sg" y="248"/><text x="14" y="263.500">IOR</text><use href="#sg" y="261"/><text x="13" y="275.500">Transmission</text><use href="#sg" y="273"/><text x="13" y="287.500">Transmission Roughness</text><use href="#sg" y="285"/><text x="7" y="300.500">Emission</text><use href="#sy" y="298"/><text x="13" y="312.500">Emission Strength</text><use href="#sg" y="310"/><text x="13" y="324.500">Alpha</text><use href="#sg" y="322"/><text x="7" y="337.500">Normal</text><use href="#sb" y="335"/><text x="7" y="349.500">Clearcoat Normal</text><use href="#sb" y="347"/><text x="7" y="361.500">Tangent</text><use href="#sb" y="359"/></g>
</svg>
</body></html>
